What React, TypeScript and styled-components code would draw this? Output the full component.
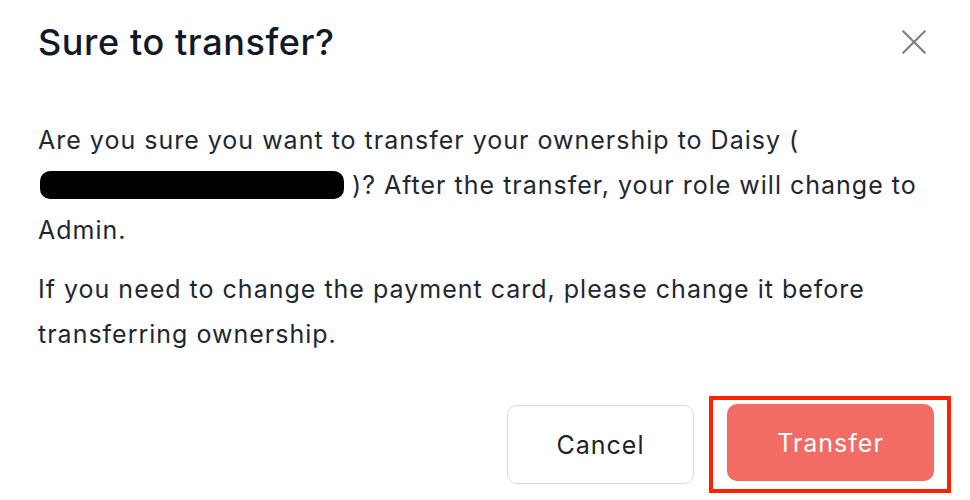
import React from "react";
import styled, { createGlobalStyle } from "styled-components";

const Global = createGlobalStyle`
  html, body { margin: 0; padding: 0; background: #ffffff; }
  body { font-family: Inter, "Noto Sans", "Liberation Sans", sans-serif; -webkit-font-smoothing: antialiased; }
`;

const Dialog = styled.div`
  width: 970px;
  height: 500px;
  box-sizing: border-box;
  padding: 22px 36px 0 38px;
  display: flex;
  flex-direction: column;
  background: #ffffff;
`;

const Header = styled.div`
  display: flex;
  align-items: center;
  justify-content: space-between;
  height: 40px;
`;

const Title = styled.h2`
  margin: 0;
  font-size: 36px;
  font-weight: 500;
  color: #111827;
  letter-spacing: 0.6px;
`;

const CloseButton = styled.button`
  border: none;
  background: none;
  padding: 0;
  width: 28px;
  height: 28px;
  display: flex;
  align-items: center;
  justify-content: center;
  color: #7b818a;
  margin-right: 6px;
  cursor: pointer;
`;

const Body = styled.div`
  margin-top: 56px;
  width: 896px;
  display: flex;
  flex-direction: column;
  gap: 14px;
`;

const Para = styled.p`
  margin: 0;
  font-size: 25px;
  line-height: 45px;
  letter-spacing: 1px;
  color: #1f2733;
`;

const Redacted = styled.span`
  display: inline-block;
  width: 304px;
  height: 28px;
  background: #000;
  border-radius: 10px;
  vertical-align: -5px;
  margin-left: 2px;
`;

const Footer = styled.div`
  margin-top: auto;
  margin-bottom: 7px;
  display: flex;
  justify-content: flex-end;
  align-items: center;
  gap: 15px;
  margin-right: -17px;
`;

const Button = styled.button<{ $primary?: boolean }>`
  box-sizing: border-box;
  height: 79px;
  border-radius: 10px;
  font-family: inherit;
  font-size: 25px;
  letter-spacing: 1px;
  font-weight: 400;
  cursor: pointer;
  border: ${(p) => (p.$primary ? "none" : "1.5px solid #d9d9d9")};
  background: ${(p) => (p.$primary ? "#f26b65" : "#ffffff")};
  color: ${(p) => (p.$primary ? "#ffffff" : "#222222")};
  width: ${(p) => (p.$primary ? "207px" : "187px")};
  ${(p) => (p.$primary ? "height: 77px;" : "")}
`;

const Highlight = styled.div`
  border: 4px solid #ff2200;
  padding: 4px 13px 8px 14px;
  display: flex;
`;

export default function App() {
  return (
    <>
      <Global />
      <Dialog>
        <Header>
          <Title>Sure to transfer?</Title>
          <CloseButton aria-label="Close">
            <svg width="26" height="26" viewBox="0 0 24 24" fill="none" stroke="currentColor" strokeWidth="2" strokeLinecap="round">
              <path d="M2 2 L22 22 M22 2 L2 22" />
            </svg>
          </CloseButton>
        </Header>
        <Body>
          <Para>
            Are you sure you want to transfer your ownership to Daisy (
            <Redacted /> )? After the transfer, your role will change to Admin.
          </Para>
          <Para>
            If you need to change the payment card, please change it before transferring ownership.
          </Para>
        </Body>
        <Footer>
          <Button>Cancel</Button>
          <Highlight>
            <Button $primary>Transfer</Button>
          </Highlight>
        </Footer>
      </Dialog>
    </>
  );
}
